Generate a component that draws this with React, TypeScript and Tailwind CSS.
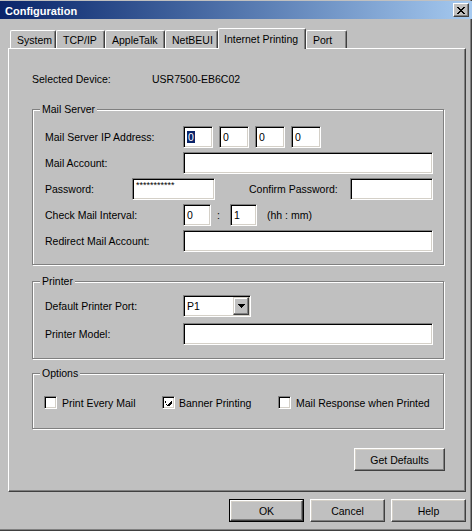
import React from "react";

function Field({ className = "", children }: { className?: string; children?: React.ReactNode }) {
  return (
    <div
      className={`h-[22px] bg-white border border-t-[#808080] border-l-[#808080] border-r-white border-b-white shadow-[inset_1px_1px_0_#000,inset_-1px_-1px_0_#d4d0c8] flex items-center pl-[3px] leading-[12px] overflow-hidden ${className}`}
    >
      {children}
    </div>
  );
}

function Button({ className = "", children, isDefault = false }: { className?: string; children?: React.ReactNode; isDefault?: boolean }) {
  const inner = (
    <div className="w-full h-full flex items-center justify-center border border-t-white border-l-white border-r-[#404040] border-b-[#404040] shadow-[inset_-1px_-1px_0_#808080,inset_1px_1px_0_#d4d0c8] leading-[12px]">
      {children}
    </div>
  );
  if (isDefault) {
    return <div className={`h-[23px] border border-black ${className}`}>{inner}</div>;
  }
  return <div className={`h-[23px] ${className}`}>{inner}</div>;
}

function Group({ title, className = "", children }: { title: string; className?: string; children?: React.ReactNode }) {
  return (
    <div className={`relative w-[412px] border border-[#808080] shadow-[inset_1px_1px_0_#fff,1px_1px_0_#fff] ${className}`}>
      <span className="absolute left-[7px] top-[-7px] px-[2px] bg-[#c0c0c0] leading-[12px]">{title}</span>
      {children}
    </div>
  );
}

function Checkbox({ checked = false }: { checked?: boolean }) {
  return (
    <div className="w-[13px] h-[13px] shrink-0 bg-white border border-t-[#808080] border-l-[#808080] border-r-white border-b-white shadow-[inset_1px_1px_0_#000,inset_-1px_-1px_0_#d4d0c8] flex items-center justify-center">
      {checked && (
        <svg width="7" height="7" viewBox="0 0 7 7" shapeRendering="crispEdges">
          <path d="M0 2h1v3h1v1h1v-1h1v-1h1v-1h1v-1h1v3h-1v1h-1v1h-1v1h-1v-1h-1v-1h-1z" fill="#000" />
        </svg>
      )}
    </div>
  );
}

function Tab({ className = "", children }: { className?: string; children?: React.ReactNode }) {
  return (
    <div
      className={`h-[18px] pl-[6px] pt-[3px] leading-[12px] border-l border-t border-r border-l-white border-t-white border-r-[#404040] rounded-tl-[2px] rounded-tr-[2px] shadow-[inset_-1px_0_0_#808080] whitespace-nowrap ${className}`}
    >
      {children}
    </div>
  );
}

export default function App() {
  return (
    <div className="w-[472px] h-[531px] bg-[#c0c0c0] text-black text-[10.5px] font-['Liberation_Sans',Arial,sans-serif] pt-[1px] shadow-[inset_-1px_-1px_0_#404040,inset_-2px_-2px_0_#808080] overflow-hidden">
      {/* Title bar */}
      <div className="h-[18px] flex items-center justify-between bg-gradient-to-r from-[#0a246a] to-[#a6caf0] pl-[5px] pr-[3px]">
        <span className="text-white font-bold text-[11px] leading-[13px] pt-[2px]">Configuration</span>
        <div className="w-[16px] h-[14px] bg-[#c0c0c0] border border-t-white border-l-white border-r-[#404040] border-b-[#404040] shadow-[inset_-1px_-1px_0_#808080] flex items-center justify-center">
          <svg width="8" height="7" viewBox="0 0 8 7" shapeRendering="crispEdges">
            <path d="M0 0h2v1h1v1h2v-1h1v-1h2v1h-1v1h-1v1h-1v1h1v1h1v1h1v1h-2v-1h-1v-1h-2v1h-1v1h-2v-1h1v-1h1v-1h1v-1h-1v-1h-1v-1h-1z" fill="#000" />
          </svg>
        </div>
      </div>

      {/* Tabs */}
      <div className="relative z-10 flex items-end h-[20px] mt-[9px] ml-[10px]">
        <Tab className="w-[46px]">System</Tab>
        <Tab className="w-[49px]">TCP/IP</Tab>
        <Tab className="w-[60px]">AppleTalk</Tab>
        <Tab className="w-[53px]">NetBEUI</Tab>
        <div className="h-[21px] mb-[-1px] w-[88px] bg-[#c0c0c0] pl-[5px] pt-[4px] leading-[12px] border-l border-t border-r border-l-white border-t-white border-r-[#404040] rounded-tl-[2px] rounded-tr-[2px] shadow-[inset_-1px_0_0_#808080] whitespace-nowrap">
          Internet Printing
        </div>
        <Tab className="w-[41px]">Port</Tab>
      </div>

      {/* Panel */}
      <div className="ml-[8px] w-[458px] h-[444px] border border-t-white border-l-white border-r-[#404040] border-b-[#404040] shadow-[inset_-1px_-1px_0_#808080] pl-[23px]">
        <div className="mt-[24px] flex h-[12px] leading-[12px]">
          <span className="w-[120px]">Selected Device:</span>
          <span>USR7500-EB6C02</span>
        </div>

        {/* Mail Server */}
        <Group title="Mail Server" className="mt-[24px] pt-[16px] pb-[12px] pl-[12px]">
          <div className="flex flex-col gap-[4px]">
            <div className="flex items-center h-[22px]">
              <span className="w-[138px] leading-[12px]">Mail Server IP Address:</span>
              <div className="flex gap-[6px]">
                <Field className="w-[30px] pl-[2px]">
                  <span className="bg-[#0a246a] text-white px-[1px]">0</span>
                </Field>
                <Field className="w-[30px]">0</Field>
                <Field className="w-[30px]">0</Field>
                <Field className="w-[30px]">0</Field>
              </div>
            </div>
            <div className="flex items-center h-[22px]">
              <span className="w-[138px] leading-[12px]">Mail Account:</span>
              <Field className="w-[250px]" />
            </div>
            <div className="flex items-center h-[22px]">
              <span className="w-[87px] leading-[12px]">Password:</span>
              <Field className="w-[83px] items-start pt-[2px]">
                <span className="text-[9px] leading-[9px] tracking-[0px]">***********</span>
              </Field>
              <span className="ml-[34px] w-[101px] leading-[12px]">Confirm Password:</span>
              <Field className="w-[83px]" />
            </div>
            <div className="flex items-center h-[22px]">
              <span className="w-[138px] leading-[12px]">Check Mail Interval:</span>
              <Field className="w-[28px]">0</Field>
              <span className="w-[19px] pl-[6px] leading-[12px]">:</span>
              <Field className="w-[27px]">1</Field>
              <span className="ml-[10px] leading-[12px]">(hh : mm)</span>
            </div>
            <div className="flex items-center h-[22px]">
              <span className="w-[138px] leading-[12px]">Redirect Mail Account:</span>
              <Field className="w-[250px]" />
            </div>
          </div>
        </Group>

        {/* Printer */}
        <Group title="Printer" className="mt-[16px] pt-[13px] pb-[13px] pl-[12px]">
          <div className="flex flex-col gap-[6px]">
            <div className="flex items-center h-[22px]">
              <span className="w-[138px] leading-[12px]">Default Printer Port:</span>
              <div className="w-[68px] h-[22px] bg-white border border-t-[#808080] border-l-[#808080] border-r-white border-b-white shadow-[inset_1px_1px_0_#000,inset_-1px_-1px_0_#d4d0c8] flex items-center justify-between pl-[3px] pr-[1px]">
                <span className="leading-[12px]">P1</span>
                <div className="w-[16px] h-[18px] bg-[#c0c0c0] border border-t-[#d4d0c8] border-l-[#d4d0c8] border-r-[#404040] border-b-[#404040] shadow-[inset_-1px_-1px_0_#808080,inset_1px_1px_0_#fff] flex items-center justify-center">
                  <svg width="7" height="4" viewBox="0 0 7 4" shapeRendering="crispEdges">
                    <path d="M0 0h7v1h-1v1h-1v1h-1v1h-1v-1h-1v-1h-1v-1h-1z" fill="#000" />
                  </svg>
                </div>
              </div>
            </div>
            <div className="flex items-center h-[22px]">
              <span className="w-[138px] leading-[12px]">Printer Model:</span>
              <Field className="w-[250px]" />
            </div>
          </div>
        </Group>

        {/* Options */}
        <Group title="Options" className="mt-[14px] pt-[22px] pb-[19px] pl-[11px]">
          <div className="flex items-center h-[13px] leading-[12px]">
            <div className="w-[118px] flex items-center gap-[5px]">
              <Checkbox />
              <span>Print Every Mail</span>
            </div>
            <div className="w-[116px] flex items-center gap-[4px]">
              <Checkbox checked />
              <span>Banner Printing</span>
            </div>
            <div className="flex items-center gap-[5px]">
              <Checkbox />
              <span>Mail Response when Printed</span>
            </div>
          </div>
        </Group>

        <Button className="mt-[19px] ml-[322px] w-[91px]">Get Defaults</Button>
      </div>

      {/* Bottom buttons */}
      <div className="mt-[7px] ml-[229px] flex gap-[6px]">
        <Button isDefault className="w-[75px]">OK</Button>
        <Button className="w-[75px]">Cancel</Button>
        <Button className="w-[75px]">Help</Button>
      </div>
    </div>
  );
}
